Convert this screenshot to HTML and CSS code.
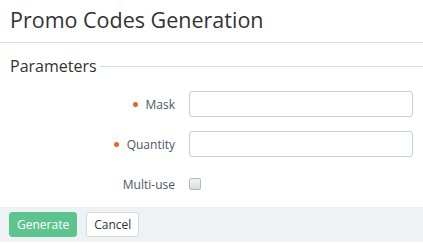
FILE: index.html
```
<!DOCTYPE html>
<html lang="en">
<head>
    <meta charset="UTF-8">
    <meta name="viewport" content="width=device-width, initial-scale=1.0">
    <title>Promo Codes Generation</title>
    <link rel="stylesheet" href="styles.css">
</head>
<body>

<div class="page-header">
    <h1>Promo Codes Generation</h1>
</div>

<form class="gen-form">
    <div class="section-title">
        <span>Parameters</span>
    </div>

    <div class="form-row">
        <label class="form-label required" for="mask">Mask</label>
        <input type="text" id="mask" class="form-input">
    </div>
    <div class="form-row">
        <label class="form-label required" for="qty">Quantity</label>
        <input type="text" id="qty" class="form-input">
    </div>
    <div class="form-row check-row">
        <label class="form-label" for="multi">Multi-use</label>
        <span class="checkbox"></span>
    </div>

    <div class="form-footer">
        <button type="button" class="btn btn-primary">Generate</button>
        <button type="button" class="btn btn-default">Cancel</button>
    </div>
</form>

</body>
</html>
```

FILE: styles.css
```
body {
    margin: 0;
    font-family: "Open Sans", Arial, sans-serif;
    color: #333;
    background: #fff;
}
.page-header {
    height: 42px;
    border-bottom: 1px solid #d6dce2;
    padding: 0 10px;
}
.page-header h1 {
    margin: 0;
    font-size: 21.5px;
    font-weight: 400;
    line-height: 40px;
    color: #333;
}
.section-title {
    display: flex;
    align-items: center;
    margin: 12px 0 0 10px;
    font-size: 16px;
    line-height: 22px;
    color: #333;
}
.section-title::after {
    content: "";
    flex: 1;
    height: 1px;
    background: #d6dce2;
    margin-left: 3px;
}
.form-row {
    display: flex;
    align-items: center;
    height: 26px;
    margin-top: 14px;
}
.form-label {
    width: 175px;
    text-align: right;
    font-size: 12px;
    color: #4b5766;
    margin-right: 14px;
}
.required::before {
    content: "";
    display: inline-block;
    width: 5px;
    height: 5px;
    border-radius: 50%;
    background: #f0602d;
    margin-right: 8px;
    vertical-align: 2px;
}
.form-input {
    box-sizing: border-box;
    width: 224px;
    height: 26px;
    border: 1px solid #c8ced4;
    border-radius: 3px;
    padding: 0 6px;
    font-family: inherit;
}
.check-row {
    margin-top: 14px;
}
.checkbox {
    box-sizing: border-box;
    width: 12px;
    height: 12px;
    border: 1px solid #b4b9be;
    border-radius: 2px;
    background: linear-gradient(#f2f2f2, #dcdcdc);
}
.form-footer {
    display: flex;
    margin-top: 10px;
    padding: 5px 9px;
    background: #eff2f5;
    height: 25px;
}
.btn {
    height: 25px;
    padding: 0 7px;
    font-family: inherit;
    font-size: 12px;
    border-radius: 3px;
    margin-right: 9px;
    cursor: pointer;
}
.btn-primary {
    background: #5ec48e;
    border: 1px solid #5ec48e;
    color: #fff;
}
.btn-default {
    background: #fff;
    border: 1px solid #d3d8dd;
    color: #333;
}
```
